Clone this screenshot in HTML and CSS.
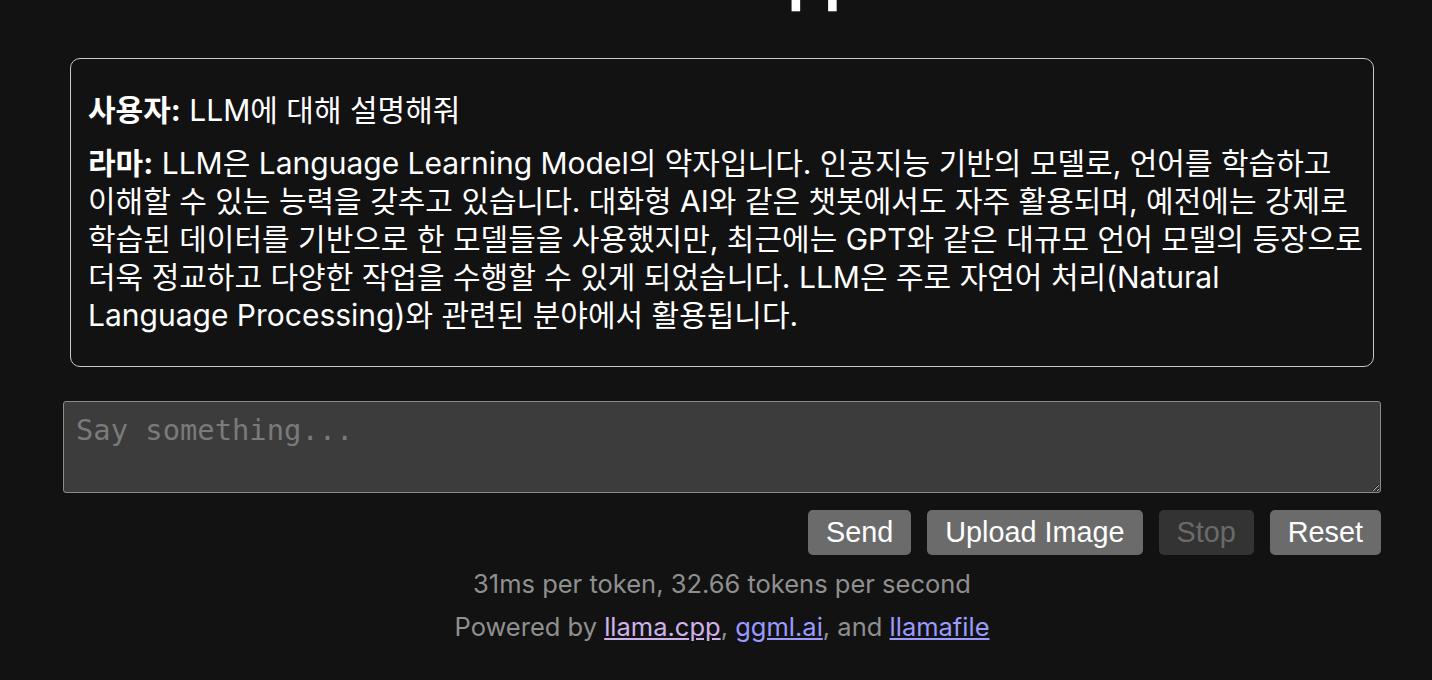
FILE: index.html
```html
<!DOCTYPE html>
<html lang="ko">
<head>
    <meta charset="UTF-8">
    <meta name="viewport" content="width=device-width, initial-scale=1.0">
    <title>llama.cpp - chat</title>
    <link rel="stylesheet" href="styles.css">
</head>
<body>
    <div class="page">
        <header>
            <h1 class="title">llama.cpp</h1>
        </header>

        <main>
            <section class="chat" id="chat">
                <p><strong>사용자:</strong> LLM에 대해 설명해줘</p>
                <p><strong>라마:</strong> LLM은 Language Learning Model의 약자입니다. 인공지능 기반의 모델로, 언어를 학습하고<br>이해할 수 있는 능력을 갖추고 있습니다. 대화형 AI와 같은 챗봇에서도 자주 활용되며, 예전에는 강제로<br>학습된 데이터를 기반으로 한 모델들을 사용했지만, 최근에는 GPT와 같은 대규모 언어 모델의 등장으로<br>더욱 정교하고 다양한 작업을 수행할 수 있게 되었습니다. LLM은 주로 자연어 처리(Natural<br>Language Processing)와 관련된 분야에서 활용됩니다.</p>
            </section>

            <form class="input-form">
                <textarea class="prompt" placeholder="Say something..."></textarea>
                <div class="right">
                    <button type="button" class="btn">Send</button>
                    <button type="button" class="btn">Upload Image</button>
                    <button type="button" class="btn" disabled>Stop</button>
                    <button type="button" class="btn">Reset</button>
                </div>
            </form>
        </main>

        <footer>
            <p class="stats">31ms per token, 32.66 tokens per second</p>
            <p class="powered">Powered by <a href="#" class="visited">llama.cpp</a>, <a href="#">ggml.ai</a>, and <a href="#">llamafile</a></p>
        </footer>
    </div>
</body>
</html>
```

FILE: styles.css
```css
body {
    margin: 0;
    background-color: #121212;
    color: #fff;
    font-family: Inter, "Noto Sans CJK KR", sans-serif;
    overflow: hidden;
}

.page {
    padding: 0 51px 0 63px;
}

.title {
    margin: -58px 0 44px;
    height: 72px;
    text-align: center;
    font-size: 58px;
    font-weight: 700;
    line-height: 72px;
}

.chat {
    margin: 0 7px;
    padding: 17px 17px;
    border: 1px solid #c8c8c8;
    border-radius: 10px;
}

.chat p {
    margin: 15px 0;
    font-size: 30px;
    line-height: 38px;
    white-space: nowrap;
}

.input-form {
    margin-top: 34px;
}

.prompt {
    display: block;
    width: 100%;
    height: 92px;
    box-sizing: border-box;
    padding: 11px 12px;
    background-color: #3c3c3c;
    color: #fff;
    border: 1px solid #8a8a8a;
    border-radius: 3px;
    font-family: "DejaVu Sans Mono", monospace;
    font-size: 28.8px;
    line-height: 34px;
}

.prompt::placeholder {
    color: #7a7a7a;
}

.right {
    display: flex;
    justify-content: flex-end;
    gap: 16px;
    margin-top: 17px;
}

.btn {
    padding: 6px 18px;
    background-color: #6b6b6b;
    color: #fff;
    border: none;
    border-radius: 5px;
    font-family: "Liberation Sans", Arial, sans-serif;
    font-size: 28.8px;
    line-height: 33px;
}

.btn:disabled {
    background-color: #333;
    color: #6a6a6a;
}

footer {
    text-align: center;
    color: #8f8f8f;
    font-size: 25.5px;
}

.stats {
    margin: 14px 0 0;
    line-height: 30px;
}

.powered {
    margin: 13px 0 0;
    line-height: 30px;
}

footer a {
    color: #9a9aff;
}

footer a.visited {
    color: #cfb2ec;
}
```
